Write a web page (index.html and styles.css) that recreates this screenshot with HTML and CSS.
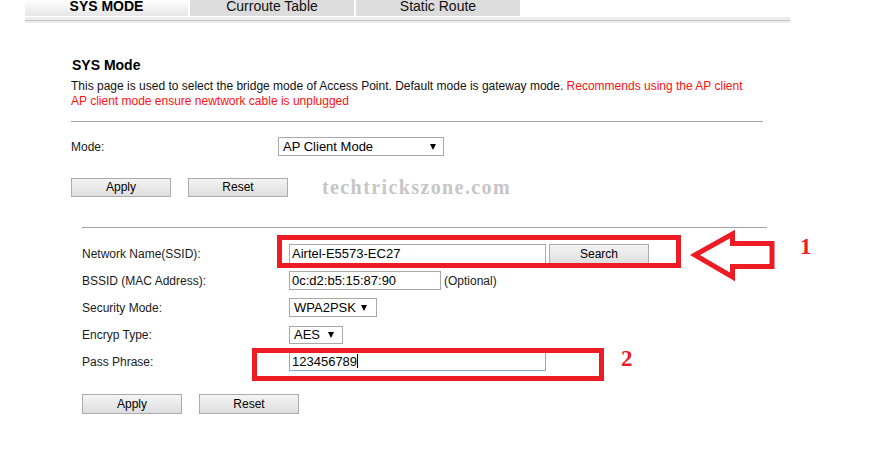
FILE: index.html
```html
<!DOCTYPE html>
<html>
<head>
<meta charset="utf-8">
<title>SYS Mode</title>
<link rel="stylesheet" href="styles.css">
</head>
<body>
<div class="page">
  <div class="tabs">
    <div class="tab active">SYS MODE</div>
    <div class="tab">Curroute Table</div>
    <div class="tab">Static Route</div>
  </div>
  <div class="tabline"></div>

  <div class="content">
    <h2 class="title">SYS Mode</h2>
    <p class="desc">This page is used to select the bridge mode of Access Point. Default mode is gateway mode. <span class="warn">Recommends using the AP client AP client mode ensure newtwork cable is unplugged</span></p>
    <div class="rule"></div>
    <div class="mode-row">
      <div class="mode-label">Mode:</div>
      <div class="select select-mode"><span>AP Client Mode</span><i class="tri"></i></div>
    </div>
    <div class="btn-row">
      <div class="btn">Apply</div>
      <div class="btn">Reset</div>
      <div class="watermark">techtrickszone.com</div>
    </div>
  </div>

  <div class="client">
    <div class="rule"></div>
    <div class="rows">
      <div class="row">
        <div class="label">Network Name(SSID):</div>
        <div class="field f-ssid">Airtel-E5573-EC27</div>
        <div class="btn btn-search">Search</div>
      </div>
      <div class="row">
        <div class="label">BSSID (MAC Address):</div>
        <div class="field f-bssid">0c:d2:b5:15:87:90</div>
        <div class="hint">(Optional)</div>
      </div>
      <div class="row">
        <div class="label">Security Mode:</div>
        <div class="select select-sec"><span>WPA2PSK</span><i class="tri"></i></div>
      </div>
      <div class="row">
        <div class="label">Encryp Type:</div>
        <div class="select select-enc"><span>AES</span><i class="tri"></i></div>
      </div>
      <div class="row">
        <div class="label">Pass Phrase:</div>
        <div class="field f-pass focus">123456789<span class="caret"></span></div>
      </div>
    </div>
    <div class="btn-row2">
      <div class="btn">Apply</div>
      <div class="btn">Reset</div>
    </div>
  </div>

  <div class="mark box1"></div>
  <div class="mark box2"></div>
  <svg class="arrow" viewBox="680 220 120 70" width="120" height="70">
    <polygon points="695,255 732.5,234 732.5,243.5 772,243.5 772,266.5 732.5,266.5 732.5,277" fill="none" stroke="#ed1c24" stroke-width="5" stroke-linejoin="miter"/>
  </svg>
  <div class="num num1">1</div>
  <div class="num num2">2</div>
</div>
</body>
</html>
```

FILE: styles.css
```css
html, body {
  margin: 0;
  padding: 0;
  background: #fff;
}
body {
  font-family: "Liberation Sans", Arial, sans-serif;
  color: #1a1a1a;
  font-size: 12px;
}
.page {
  position: relative;
  width: 885px;
  height: 475px;
  overflow: hidden;
}
.tabs {
  margin-left: 25px;
  width: 765px;
  height: 16px;
  display: flex;
  gap: 2px;
}
.tab {
  width: 164px;
  height: 16px;
  background: #dcdcdc;
  font-size: 14px;
  line-height: 12px;
  text-align: center;
  color: #111;
  overflow: hidden;
}
.tab.active {
  width: 163px;
  background: linear-gradient(#ffffff, #e6e6e6);
  font-weight: bold;
  color: #000;
}
.tabline {
  margin: 1px 0 0 25px;
  width: 765px;
  height: 6px;
  background: linear-gradient(#ececec 0 3px, #c2c2c2 3px 4px, #ececec 4px 6px);
}
.content {
  margin-left: 71px;
  width: 692px;
}
.title {
  margin: 34px 0 0 1px;
  font-size: 14px;
  line-height: 16px;
  font-weight: bold;
  color: #000;
}
.desc {
  margin: 6px 0 0;
  max-width: 682px;
  font-size: 12px;
  line-height: 15px;
  color: #111;
}
.warn {
  color: #ff1010;
}
.rule {
  height: 1px;
  background: #a0a0a0;
}
.content .rule {
  margin-top: 12px;
}
.mode-row {
  margin-top: 15px;
  display: flex;
  align-items: center;
  height: 19px;
}
.mode-label {
  width: 207px;
  font-size: 12px;
}
.select {
  box-sizing: border-box;
  height: 19px;
  border: 1px solid #a9a9a9;
  background: #fff;
  display: flex;
  align-items: center;
  justify-content: space-between;
  font-size: 13px;
  color: #000;
  padding: 0 7px 0 4px;
}
.select-mode { width: 166px; }
.select-sec { width: 88px; padding-right: 9px; }
.select-enc { width: 54px; height: 18px; padding-right: 8px; }
.tri {
  width: 0;
  height: 0;
  border-top: 6px solid #000;
  border-left: 3px solid transparent;
  border-right: 3px solid transparent;
}
.btn-row {
  margin-top: 22px;
  display: flex;
  align-items: center;
  gap: 17px;
}
.btn {
  box-sizing: border-box;
  width: 100px;
  height: 19px;
  border: 1px solid #acacac;
  background: linear-gradient(#f4f4f4, #dedede);
  font-size: 12px;
  line-height: 17px;
  text-align: center;
  color: #000;
}
.watermark {
  margin-left: 17px;
  font-family: "Liberation Serif", "Times New Roman", serif;
  font-weight: bold;
  font-size: 20px;
  letter-spacing: 1.4px;
  color: #c6c6c6;
  line-height: 19px;
}
.client {
  margin-left: 82px;
  margin-top: 30px;
  width: 685px;
}
.rows {
  margin-top: 12px;
}
.row {
  height: 27px;
  display: flex;
  align-items: center;
}
.label {
  width: 207px;
  font-size: 12px;
  color: #1a1a1a;
}
.field {
  box-sizing: border-box;
  height: 19px;
  border: 1px solid #a9a9a9;
  background: #fff;
  font-size: 13px;
  line-height: 17px;
  padding-left: 2px;
  color: #000;
  white-space: nowrap;
}
.f-ssid { width: 257px; height: 20px; line-height: 18px; }
.f-bssid { width: 152px; }
.f-pass { width: 257px; }
.field.focus { border-color: #7fabde; }
.caret {
  display: inline-block;
  width: 1px;
  height: 14px;
  background: #000;
  vertical-align: -2px;
}
.btn-search {
  margin-left: 3px;
  height: 20px;
  line-height: 18px;
}
.hint {
  margin-left: 3px;
  font-size: 12px;
}
.btn-row2 {
  margin-top: 19px;
  display: flex;
  gap: 17px;
}
.btn-row2 .btn { height: 20px; line-height: 18px; }
.mark {
  position: absolute;
  box-sizing: border-box;
  border: 5px solid #ed1c24;
}
.box1 { left: 277px; top: 235px; width: 404px; height: 33px; }
.box2 { left: 252px; top: 348px; width: 352px; height: 33px; }
.arrow {
  position: absolute;
  left: 680px;
  top: 220px;
}
.num {
  position: absolute;
  font-family: "Liberation Serif", "Times New Roman", serif;
  font-weight: bold;
  font-size: 23px;
  line-height: 23px;
  color: #ed1c24;
}
.num1 { left: 800px; top: 235px; }
.num2 { left: 621px; top: 347px; }
```
